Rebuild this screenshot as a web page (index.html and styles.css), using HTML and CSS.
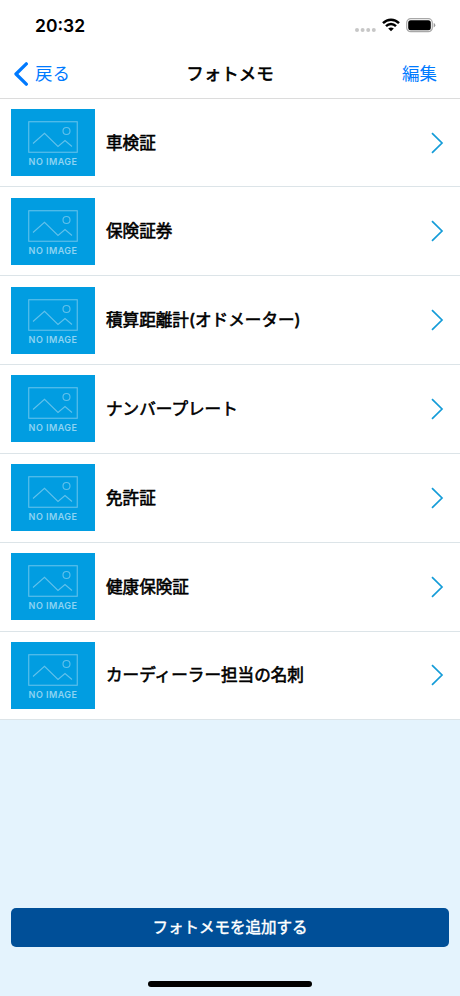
FILE: index.html
```
<!DOCTYPE html>
<html lang="ja">
<head>
<meta charset="utf-8">
<title>フォトメモ</title>
<link rel="stylesheet" href="styles.css">
</head>
<body>
<svg class="defs" aria-hidden="true">
  <symbol id="photo" viewBox="0 0 50 32">
    <rect x=".75" y=".75" width="48.5" height="30.5"/>
    <path d="M5 22.5 16.5 12.3 30 25.5 37 19.5 44 25.5"/>
    <circle cx="38.5" cy="10" r="3.5"/>
  </symbol>
  <symbol id="next" viewBox="0 0 13 22"><path d="M1 1.2 11 11 1 20.8"/></symbol>
</svg>
<div class="screen">
  <div class="status">
    <span class="time">20:32</span>
    <div class="indicators">
      <svg class="signal" width="21" height="4" viewBox="0 0 21 4"><circle cx="2" cy="2" r="2"/><circle cx="7.6" cy="2" r="2"/><circle cx="13.2" cy="2" r="2"/><circle cx="18.8" cy="2" r="2"/></svg>
      <svg class="wifi" width="18" height="14" viewBox="0 0 18 14"><path class="arc" d="M1 5.2C5.5.5 12.5.5 17 5.2M4 8.2C6.8 5.3 11.2 5.3 14 8.2"/><path d="M9 13.2 6.2 10.5Q9 8.3 11.8 10.5Z"/></svg>
      <svg class="battery" width="30" height="15" viewBox="0 0 30 15"><rect class="shell" x=".7" y=".7" width="25.6" height="13" rx="4"/><rect x="2.2" y="2.2" width="22.6" height="10" rx="2.5"/><path class="cap" d="M27.7 5Q29.3 5.6 29.3 7.2T27.7 9.4Z"/></svg>
    </div>
  </div>
  <header class="nav">
    <div class="back"><svg width="14" height="24" viewBox="0 0 14 24"><path d="M12.3 1.8 2 12 12.3 22.2"/></svg><span>戻る</span></div>
    <h1>フォトメモ</h1>
    <span class="edit">編集</span>
  </header>
  <ul class="list">
    <li><div class="thumb"><svg><use href="#photo"/></svg><span>NO IMAGE</span></div><span class="name">車検証</span><svg class="next"><use href="#next"/></svg></li>
    <li><div class="thumb"><svg><use href="#photo"/></svg><span>NO IMAGE</span></div><span class="name">保険証券</span><svg class="next"><use href="#next"/></svg></li>
    <li><div class="thumb"><svg><use href="#photo"/></svg><span>NO IMAGE</span></div><span class="name">積算距離計(オドメーター)</span><svg class="next"><use href="#next"/></svg></li>
    <li><div class="thumb"><svg><use href="#photo"/></svg><span>NO IMAGE</span></div><span class="name">ナンバープレート</span><svg class="next"><use href="#next"/></svg></li>
    <li><div class="thumb"><svg><use href="#photo"/></svg><span>NO IMAGE</span></div><span class="name">免許証</span><svg class="next"><use href="#next"/></svg></li>
    <li><div class="thumb"><svg><use href="#photo"/></svg><span>NO IMAGE</span></div><span class="name">健康保険証</span><svg class="next"><use href="#next"/></svg></li>
    <li><div class="thumb"><svg><use href="#photo"/></svg><span>NO IMAGE</span></div><span class="name">カーディーラー担当の名刺</span><svg class="next"><use href="#next"/></svg></li>
  </ul>
  <footer class="footer">
    <button class="add">フォトメモを追加する</button>
    <div class="home"></div>
  </footer>
</div>
</body>
</html>
```
FILE: styles.css
```
* { box-sizing: border-box; }
body { margin: 0; font-family: Inter, "Noto Sans CJK JP", sans-serif; color: #000; }
svg { display: block; fill: none; }
.defs { width: 0; height: 0; position: absolute; }
.screen { width: 460px; height: 996px; display: flex; flex-direction: column; background: #e4f3fd; }
.status { height: 50px; flex: none; display: flex; justify-content: space-between; padding: 0 24px 0 35px; background: #fff; }
.time { font-size: 17.5px; line-height: 22px; font-weight: 600; padding-top: 15px; }
.indicators { display: flex; align-items: flex-start; padding-top: 18px; }
.signal { fill: #c7c7c7; margin: 10px 6px 0 0; }
.wifi { fill: #000; margin-right: 6px; }
.arc { fill: none; stroke: #000; stroke-width: 2.4; }
.battery { fill: #000; }
.shell { fill: none; stroke: #a8a8a8; stroke-width: 1.2; }
.cap { fill: #999; }
.nav { height: 48.6px; flex: none; display: grid; grid-template-columns: 1fr auto 1fr; align-items: center; padding: 0 23px; background: #fff; border-bottom: 1px solid #dcdcdc; font-size: 17.5px; line-height: 26px; color: #007aff; }
.back { display: flex; align-items: center; gap: 7px; margin-left: -9px; }
.back svg { stroke: #007aff; stroke-width: 3.3; stroke-linecap: round; stroke-linejoin: round; }
.nav h1 { margin: 0; font-size: 17.5px; font-weight: 400; line-height: 26px; color: #000; -webkit-text-stroke: .6px #000; }
.edit { text-align: right; }
.list { list-style: none; margin: 0; padding: 0; }
.list li { height: 88.83px; display: flex; align-items: center; padding: 0 16px 0 11px; background: #fff; border-bottom: 1px solid #dce4e8; }
.thumb { width: 84px; height: 67px; flex: none; background: #019de1; display: flex; flex-direction: column; align-items: center; padding-top: 12px; color: #8dd3f2; }
.thumb svg { width: 50px; height: 32px; stroke: #62c1eb; stroke-width: 1.1; }
.thumb span { font: 600 9px/11px Inter, sans-serif; letter-spacing: .45px; margin-top: 3px; white-space: nowrap; }
.name { flex: 1; margin-left: 11px; font-size: 16.6px; font-weight: 400; line-height: 24px; -webkit-text-stroke: .6px #000; }
.next { width: 13px; height: 22px; stroke: #149cd8; stroke-width: 1.7; }
.footer { margin-top: auto; display: flex; flex-direction: column; align-items: center; padding: 0 11px 9px; }
.add { width: 100%; height: 39px; border: 0; border-radius: 5px; padding: 0; background: #004f98; color: #fff; font: 400 15.5px/23px Inter, "Noto Sans CJK JP", sans-serif; -webkit-text-stroke: .45px #fff; }
.home { width: 164px; height: 6px; border-radius: 3px; background: #000; margin-top: 34px; }
```
